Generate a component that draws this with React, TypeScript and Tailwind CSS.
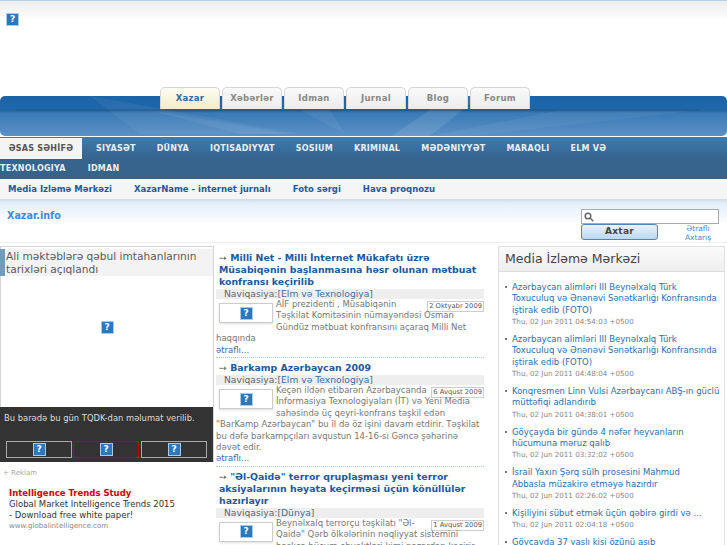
const tabs = ['Xazar', 'Xəbərlər', 'Idman', 'Jurnal', 'Blog', 'Forum'];
const navItems = ['SIYASƏT', 'DÜNYA', 'IQTISADIYYAT', 'SOSIUM', 'KRIMINAL', 'MƏDƏNIYYƏT', 'MARAQLI', 'ELM VƏ'];
const subItems = ['Media Izləmə Mərkəzi', 'XazarName - internet jurnalı', 'Foto sərgi', 'Hava proqnozu'];

const feed = [
  { title: 'Azərbaycan alimləri III Beynəlxalq Türk\nToxuculuq və Ənənəvi Sənətkarlığı Konfransında\niştirak edib (FOTO)', date: 'Thu, 02 Jun 2011 04:54:03 +0500' },
  { title: 'Azərbaycan alimləri III Beynəlxalq Türk\nToxuculuq və Ənənəvi Sənətkarlığı Konfransında\niştirak edib (FOTO)', date: 'Thu, 02 Jun 2011 04:48:04 +0500' },
  { title: 'Konqresmen Linn Vulsi Azərbaycanı ABŞ-ın güclü\nmüttəfiqi adlandırıb', date: 'Thu, 02 Jun 2011 04:38:01 +0500' },
  { title: 'Göyçayda bir gündə 4 nəfər heyvanların\nhücumuna məruz qalıb', date: 'Thu, 02 Jun 2011 03:32:02 +0500' },
  { title: 'İsrail Yaxın Şərq sülh prosesini Mahmud\nAbbasla müzakirə etməyə hazırdır', date: 'Thu, 02 Jun 2011 02:26:02 +0500' },
  { title: 'Kişiliyini sübut etmək üçün qəbirə girdi və ...', date: 'Thu, 02 Jun 2011 02:04:18 +0500' },
  { title: 'Göyçayda 37 yaşlı kişi özünü asıb', date: 'Thu, 02 Jun 2011 01:12:00 +0500' },
];

const articles = [
  {
    title: 'Milli Net - Milli İnternet Mükafatı üzrə\nMüsabiqənin başlanmasına həsr olunan mətbuat\nkonfransı keçirilib',
    cat: 'Elm və Texnologiya',
    date: '2 Oktyabr 2009',
    text: 'AİF prezidenti , Müsabiqənin\nTəşkilat Komitəsinin nümayəndəsi Osman\nGündüz mətbuat konfransını açaraq Milli Net\nhaqqında',
  },
  {
    title: 'Barkamp Azərbaycan 2009',
    cat: 'Elm və Texnologiya',
    date: '6 Avqust 2009',
    text: 'Keçən ildən etibarən Azərbaycanda\nİnformasiya Texnologiyaları (İT) və Yeni Media\nsahəsində üç qeyri-konfrans təşkil edən\n"BarKamp Azərbaycan" bu il də öz işini davam etdirir. Təşkilat\nbu dəfə barkampçıları avqustun 14-16-sı Gəncə şəhərinə\ndəvət edir.',
  },
  {
    title: '"Əl-Qaidə" terror qruplaşması yeni terror\naksiyalarının həyata keçirməsi üçün könüllülər\nhazırlayır',
    cat: 'Dünya',
    date: '1 Avqust 2009',
    text: 'Beynəlxalq terrorçu təşkilatı "Əl-\nQaidə" Qərb ölkələrinin nəqliyyat sistemini\nbaşlıca hücum obyektləri kimi nəzərdən keçirir',
  },
];

// broken image placeholder, same one everywhere in the shot
function Broken() {
  return (
    <span className="flex h-[13px] w-[13px] items-center justify-center border border-[#a9cbe8] bg-[#2a78be] text-[9px] font-bold leading-none text-white">
      ?
    </span>
  );
}

export default function App() {
  return (
    <div className="h-[545px] w-[727px] overflow-hidden bg-white font-['DejaVu_Sans',sans-serif]">
      <div className="h-[87px] border-t border-[#b4d3e6] bg-[linear-gradient(#eeeeee_0px,#fafafa_15px,#ffffff_16px)] pl-[6px] pt-[12px]">
        <Broken />
      </div>

      {/* tabs sit over the blue band */}
      <div className="relative z-10 -mb-[13px] flex h-[22px] gap-[2px] pl-[160px]">
        {tabs.map((t, i) => (
          <div
            key={t}
            className={`flex w-[60px] items-center justify-center rounded-t-[5px] border border-b-0 border-[#d5d5d5] text-[8.5px] font-bold tracking-[0.3px] ${
              i === 0
                ? 'bg-[linear-gradient(#fdfcf3,#f2ecc8)] text-[#2e6aa8]'
                : 'bg-[linear-gradient(#fafafa,#ececec)] text-[#888888]'
            }`}
          >
            {t}
          </div>
        ))}
      </div>

      <div className="relative h-[40px] overflow-hidden rounded-[5px] bg-[linear-gradient(#1c64a8_0px,#1f67aa_13px,#2a659c_15px,#3a7ab6_17px,#5b91c5_40px)]">
        <svg className="absolute inset-0" width="727" height="40" viewBox="0 0 727 40">
          <path d="M90 0 L300 38 L140 38 Z" fill="#ffffff" opacity="0.05" />
          <path d="M150 14 L290 38 L240 38 Z" fill="#ffffff" opacity="0.06" />
          <path d="M300 14 L345 38 L330 14 Z" fill="#ffffff" opacity="0.06" />
          <path d="M480 0 L430 40 L392 40 L450 0 Z" fill="#ffffff" opacity="0.1" />
          <path d="M560 14 L700 14 L470 40 L430 40 Z" fill="#ffffff" opacity="0.05" />
          <path d="M16 14 L700 14" stroke="#184a78" strokeWidth="1" opacity="0.5" />
        </svg>
      </div>

      <div className="mt-px bg-[linear-gradient(#3d7cb0,#36648e_50%,#356389)] pt-px text-[8px] font-bold tracking-[0.25px] text-[#e9eef3]">
        <div className="flex h-[21px] items-center">
          <div className="flex h-full w-[82px] items-center justify-center bg-[#f4f4f4] text-[#555555]">ƏSAS SƏHİFƏ</div>
          <div className="flex gap-[21px] pl-[14px]">
            {navItems.map((n) => (
              <span key={n}>{n}</span>
            ))}
          </div>
        </div>
        <div className="flex h-[20px] items-center gap-[22px]">
          <span>TEXNOLOGIYA</span>
          <span>IDMAN</span>
        </div>
      </div>

      <div className="flex h-[21px] items-center gap-[22px] border-b border-[#dddddd] bg-[#f5f5f5] pl-[8px] text-[8.5px] font-bold text-[#1c5a9c]">
        {subItems.map((s) => (
          <span key={s}>{s}</span>
        ))}
      </div>

      <div className="flex h-[43px] border-b border-[#eeeeee] bg-[linear-gradient(#cfdfef_0px,#e6effa_3px,#fafcff_22px,#ffffff_23px)]">
        <div className="pl-[7px] pt-[9px] text-[9.6px] font-bold text-[#3c8ce0]">Xazar.info</div>
        <div className="ml-auto w-[146px] pt-[9px]">
          <div className="flex h-[15px] w-[138px] items-center border border-[#aaaaaa] bg-white pl-[2px]">
            <svg width="10" height="10" viewBox="0 0 10 10" fill="none" stroke="#666666" strokeWidth="1.5">
              <circle cx="4" cy="4" r="2.8" />
              <path d="M6 6 L9.3 9.3" />
            </svg>
          </div>
          <div className="flex">
            <div className="flex h-[16px] w-[77px] items-center justify-center rounded-[3px] border border-[#4f86b8] bg-[linear-gradient(#e8f2fb,#bcd8f1)] text-[9px] font-bold tracking-[0.3px] text-[#444444]">
              Axtar
            </div>
            <div className="ml-[17px] w-[46px] text-center text-[7.5px] leading-[9px] text-[#3c8ce0]">
              Ətraflı
              <br />
              Axtarış
            </div>
          </div>
        </div>
      </div>

      <div className="flex pt-[3px]">
        <div className="w-[214px] shrink-0">
          <div className="relative flex h-[216px] flex-col border-x border-t border-[#d5d5d5]">
            <div className="-ml-px mt-[2px] h-[27px] border-l-[5px] border-[#6e9dbf] bg-[#f3f3f3] py-[1px] pl-[1px] text-[10.6px] leading-[12.5px] text-[#5a5a5a]">
              Ali məktəblərə qəbul imtahanlarının tarixləri açıqlandı
            </div>
            <div className="flex flex-1 items-center justify-center pb-[28px]">
              <Broken />
            </div>
            <div className="-ml-px h-[55px] w-[213px] bg-[#333333] px-[4px] pt-[5px]">
              <div className="whitespace-nowrap text-[8.4px] leading-[13px] text-[#dddddd]">Bu barədə bu gün TQDK-dan məlumat verilib.</div>
              <div className="mt-[16px] flex gap-[1px] pl-[2px]">
                <div className="flex h-[17px] w-[66px] items-center justify-center border border-[#aaaaaa]"><Broken /></div>
                <div className="flex h-[17px] w-[66px] items-center justify-center border border-[#c00000]"><Broken /></div>
                <div className="ml-px flex h-[17px] w-[66px] items-center justify-center border border-[#aaaaaa]"><Broken /></div>
              </div>
            </div>
          </div>
          <div className="pl-[3px] pt-[5px] text-[7px] leading-[12px] text-[#aaaaaa]">+ Reklam</div>
          <div className="pl-[9px] pt-[9px] text-[8.5px] leading-[11px] text-[#333333]">
            <div className="font-bold text-[#d40000]">Intelligence Trends Study</div>
            <div>Global Market Intelligence Trends 2015</div>
            <div>- Download free white paper!</div>
            <div className="text-[7.1px] leading-[10px] text-[#888888]">www.globalintelligence.com</div>
          </div>
        </div>

        <div className="ml-[2px] w-[268px] shrink-0 pt-[6px]">
          {articles.map((a, i) => (
            <div key={a.title} className={i < 2 ? 'mb-[4px] border-b border-dotted border-[#a9cbe8] pb-px' : ''}>
              <div className="whitespace-pre-line pl-[3px] text-[9.4px] font-bold leading-[12px] text-[#1c5a9c]">
                <span className="text-[#666666]">➙ </span>
                {a.title}
              </div>
              <div className="mt-[1px] h-[10px] bg-[#eeeeee] pl-[8px] text-[9.2px] leading-[10px] text-[#666666]">
                Naviqasiya:[<span className="text-[#3a6e9e]">{a.cat}</span>]
              </div>
              <div className="whitespace-pre-line text-[8.5px] leading-[11.4px] text-[#777777]">
                <div className="float-left mb-[4px] ml-[3px] mr-[3px] mt-[4px] flex h-[20px] w-[54px] items-center justify-center border border-[#cccccc] shadow-sm">
                  <Broken />
                </div>
                <div className="float-right -mb-[4px] mt-[2px] border border-[#cccccc] px-[1px] text-[6.75px] leading-[9px] text-[#555555]">{a.date}</div>
                {a.text}
                <div className="clear-both text-[#3a6e9e]">ətraflı...</div>
              </div>
            </div>
          ))}
        </div>

        <div className="ml-[14px] h-[400px] w-[227px] shrink-0 border border-[#e0e0e0]">
          <div className="flex h-[25px] items-center border-b border-[#dddddd] bg-[linear-gradient(#fafafa,#eeeeee)] pl-[6px] text-[12.5px] text-[#444444]">
            Media İzləmə Mərkəzi
          </div>
          <ul className="pl-[6px] pt-[10px]">
            {feed.map((f) => (
              <li key={f.date} className="mb-[7px] flex">
                <span className="mt-[4px] mr-[5px] h-[2px] w-[2px] shrink-0 bg-[#777777]" />
                <div>
                  <div className="whitespace-pre-line text-[8.5px] leading-[11.33px] text-[#2a6fb0]">{f.title}</div>
                  <div className="text-[7.15px] leading-[11px] text-[#888888]">{f.date}</div>
                </div>
              </li>
            ))}
          </ul>
        </div>
      </div>
    </div>
  );
}
